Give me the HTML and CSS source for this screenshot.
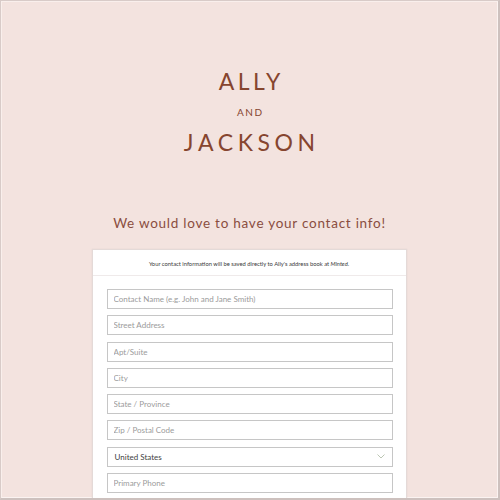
FILE: index.html
```html
<!DOCTYPE html>
<html lang="en">
<head>
<meta charset="utf-8">
<title>Ally and Jackson</title>
<link rel="stylesheet" href="styles.css">
</head>
<body>
<div class="page">
  <header class="names">
    <h1 class="name name-first">ALLY</h1>
    <div class="and">AND</div>
    <h1 class="name name-second">JACKSON</h1>
  </header>
  <p class="lead">We would love to have your contact info!</p>
  <section class="card">
    <div class="card-head"><span>Your contact information will be saved directly to Ally's address book at <em>Minted</em>.</span></div>
    <form class="fields">
      <input class="field" type="text" placeholder="Contact Name (e.g. John and Jane Smith)">
      <input class="field" type="text" placeholder="Street Address">
      <input class="field" type="text" placeholder="Apt/Suite">
      <input class="field" type="text" placeholder="City">
      <input class="field" type="text" placeholder="State / Province">
      <input class="field" type="text" placeholder="Zip / Postal Code">
      <div class="field select">
        <span>United States</span>
        <svg class="chev" width="8" height="5" viewBox="0 0 8 5"><polyline points="0.5,0.5 4,4 7.5,0.5" fill="none" stroke="#bcc6b4" stroke-width="1"/></svg>
      </div>
      <input class="field" type="text" placeholder="Primary Phone">
      <input class="field" type="text" placeholder="Email">
    </form>
  </section>
</div>
</body>
</html>
```
FILE: styles.css
```css
html, body {
  margin: 0;
  padding: 0;
}
body {
  font-family: Lato, "Open Sans", sans-serif;
}
.page {
  width: 500px;
  height: 500px;
  box-sizing: border-box;
  background: #f3e3df;
  border-top: 1px solid #d8cbc8;
  border-left: 1px solid #d8cbc8;
  border-right: 2px solid #cdc1be;
  border-bottom: 2px solid #cdc1be;
  box-shadow: inset 1px 1px 0 #f9efec, inset -1px -1px 0 #fbf3f1;
  overflow: hidden;
  display: flex;
  flex-direction: column;
  align-items: center;
}
.names {
  margin-top: 67px;
  display: flex;
  flex-direction: column;
  align-items: center;
}
.name {
  margin: 0;
  font-weight: 400;
  font-size: 23px;
  line-height: 26px;
  color: #86452f;
}
.name-first {
  letter-spacing: 3.4px;
  padding-left: 3.4px;
}
.and {
  margin-top: 12px;
  font-size: 10px;
  line-height: 12px;
  letter-spacing: 1.5px;
  color: #86452f;
  padding-left: 1.5px;
}
.name-second {
  margin-top: 11px;
  letter-spacing: 4.6px;
  padding-left: 4.6px;
}
.lead {
  margin: 59px 0 0;
  font-size: 13.5px;
  line-height: 18px;
  letter-spacing: 0.75px;
  color: #8a4d40;
}
.card {
  margin-top: 17px;
  margin-left: -1px;
  width: 315px;
  flex: none;
  height: 300px;
  box-sizing: border-box;
  background: #fff;
  border: 1px solid #e4dad8;
  box-shadow: 0 0 1px #d8cdca;
}
.card-head {
  height: 26px;
  box-sizing: border-box;
  border-bottom: 1px solid #efeaea;
  display: flex;
  align-items: center;
  justify-content: center;
  padding-top: 2px;
  font-size: 5.8px;
  color: #3a3a3a;
}
.card-head em {
  font-style: italic;
}
.fields {
  margin: 0;
  padding: 13px 14px 0 14px;
  display: flex;
  flex-direction: column;
  gap: 6.3px;
}
.field {
  display: block;
  width: 286px;
  height: 20px;
  box-sizing: border-box;
  margin: 0;
  padding: 0 6px;
  border: 1px solid #c6c6c6;
  border-radius: 0;
  background: #fff;
  font-family: Lato, "Open Sans", sans-serif;
  font-size: 8px;
  color: #444;
  outline: none;
}
.field::placeholder {
  color: #9b9b9b;
}
.select {
  display: flex;
  align-items: center;
  justify-content: space-between;
  padding: 0 7px 0 7px;
  color: #3f3f3f;
}
.chev {
  display: block;
}
```
